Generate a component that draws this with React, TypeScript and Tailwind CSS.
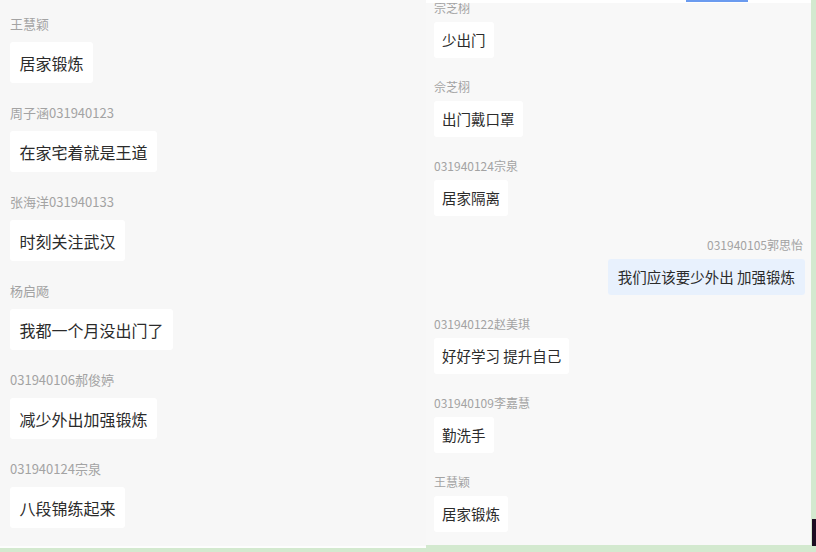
const leftMessages = [
  { name: '王慧颖', text: '居家锻炼' },
  { name: '周子涵031940123', text: '在家宅着就是王道' },
  { name: '张海洋031940133', text: '时刻关注武汉' },
  { name: '杨启飏', text: '我都一个月没出门了' },
  { name: '031940106郝俊婷', text: '减少外出加强锻炼' },
  { name: '031940124宗泉', text: '八段锦练起来' },
]

const rightMessages = [
  { name: '宗芝栩', text: '少出门', self: false },
  { name: '佘芝栩', text: '出门戴口罩', self: false },
  { name: '031940124宗泉', text: '居家隔离', self: false },
  { name: '031940105郭思怡', text: '我们应该要少外出 加强锻炼', self: true },
  { name: '031940122赵美琪', text: '好好学习 提升自己', self: false },
  { name: '031940109李嘉慧', text: '勤洗手', self: false },
  { name: '王慧颖', text: '居家锻炼', self: false },
]

const font = { fontFamily: '"Noto Sans CJK SC", "Noto Sans", sans-serif' }

export default function App() {
  return (
    <div className="w-[816px] h-[552px] bg-[#d3e9cf] overflow-hidden" style={font}>
      <div className="flex items-start h-[548px]">
        {/* Left phone screen */}
        <div className="w-[426px] h-[548px] bg-[#f7f7f7] border-b-2 border-[#fdfdfd] pl-[10px] pt-[15px] flex flex-col">
          {leftMessages.map((m, i) => (
            <div key={i} className="flex flex-col items-start mb-[21px]">
              <span className="text-[13px] leading-[18px] text-[#a3a3a3]">{m.name}</span>
              <div className="mt-[9px] h-[41px] px-[9.5px] flex items-center bg-white rounded-[3px] text-[16px] text-[#2b2b2b]">
                {m.text}
              </div>
            </div>
          ))}
        </div>

        {/* Right phone screen */}
        <div className="w-[385px] h-[545px] bg-[#f8f8f8] flex flex-col">
          <div className="h-[3px] bg-white flex">
            <div className="ml-[260px] w-[62px] h-[2px] bg-[#6b9bef]" />
          </div>
          <div className="flex-1 overflow-hidden">
            <div className="-mt-[3px] pl-[8px] pr-[6px] flex flex-col">
              {rightMessages.map((m, i) => (
                <div key={i} className={`flex flex-col mb-[21px] ${m.self ? 'items-end' : 'items-start'}`}>
                  <span className={`text-[12px] leading-[16px] text-[#a3a3a3] ${m.self ? 'mr-[2px]' : ''}`}>
                    {m.name}
                  </span>
                  <div
                    className={`mt-[6px] h-[36px] flex items-center rounded-[3px] text-[14.5px] text-[#2b2b2b] ${
                      m.self ? 'bg-[#e8f1fd] px-[10px]' : 'bg-white px-[8px]'
                    }`}
                  >
                    {m.text}
                  </div>
                </div>
              ))}
            </div>
          </div>
        </div>

        {/* Right edge strip */}
        <div className="w-[5px] h-[546px] flex flex-col justify-end">
          <div className="ml-[1px] h-[27px] bg-[#1c0d22]" />
        </div>
      </div>
    </div>
  )
}
